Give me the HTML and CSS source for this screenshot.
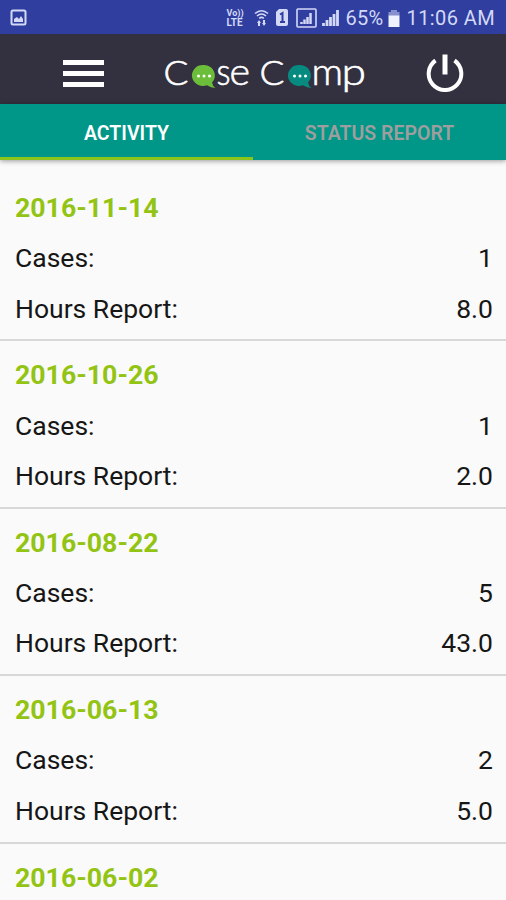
FILE: index.html
```html
<!DOCTYPE html>
<html lang="en">
<head>
  <meta charset="UTF-8" />
  <meta name="viewport" content="width=device-width, initial-scale=1.0" />
  <title>Case Camp</title>
  <link rel="stylesheet" href="styles.css">
</head>
<body>
  <div class="status-bar">
    <svg class="picture-icon" viewBox="0 0 18 18"><rect x="1.500" y="1.500" width="14" height="14" rx="1.500"/><path d="M4 13V10L7 8L9 10L11 7L13 10V13Z"/></svg>
    <div class="status-right">
      <div class="volte"><span>Vo))</span><span class="lte">LTE</span></div>
      <svg class="wifi-icon" width="15" height="18" viewBox="0 0 15 18"><path d="M1 4.500Q7.500 -1 14 4.500M3 7Q7.500 3 12 7M5.200 9.300Q7.500 7.500 9.800 9.300"/><path class="solid" d="M5 11L7 14H6V17H4V14H3ZM10 17L12 14H11V11H9V14H8Z"/></svg>
      <svg class="sim-icon" width="14" height="18" viewBox="0 0 14 18"><path d="M4 0H11Q13 0 13 2V15Q13 17 11 17H3Q1 17 1 15V3Z"/><path class="cut" d="M5 5.500L7.500 4V13M5 13H10"/></svg>
      <svg class="signal-boxed" width="22" height="21" viewBox="0 0 22 21"><rect x="1" y="1" width="19" height="18" rx="1"/><path class="bars" d="M5.500 14V16M8.500 11.500V16M11.500 9V16M14.500 5V16"/></svg>
      <svg class="signal" width="17" height="18" viewBox="0 0 17 18"><path d="M1.500 14V17M5 11V17M8.500 8V17M12 5V17M15.500 1V17"/></svg>
      <span class="percent">65%</span>
      <svg class="battery" width="12" height="17" viewBox="0 0 12 17"><path class="empty" d="M3 0H9V2H11.500V6H.5V2H3Z"/><path d="M.5 5.500H11.500V17H.5Z"/></svg>
      <span class="clock">11:06 AM</span>
    </div>
  </div>

  <header class="app-bar">
    <button class="menu-btn" aria-label="Menu"><span></span><span></span><span></span></button>
    <svg class="logo" width="204" height="50" viewBox="0 0 204 50">
      <text class="cap" x="0.500" y="41" textLength="25" lengthAdjust="spacingAndGlyphs">C</text>
      <g class="bubble-green" transform="translate(0 9)">
        <path d="M41 12a11 10.500 0 1 0 3 20.200q4 2.500 8.500 2.800q-3 -2 -3.500 -5.500A11 10.500 0 0 0 41 12Z"/>
        <circle cx="35.500" cy="23" r="1.500"/><circle cx="41" cy="23" r="1.500"/><circle cx="46.500" cy="23" r="1.500"/>
      </g>
      <text class="low" x="53.500" y="41" textLength="14" lengthAdjust="spacingAndGlyphs">s</text>
      <text class="low" x="66.500" y="41" textLength="20.500" lengthAdjust="spacingAndGlyphs">e</text>
      <text class="cap" x="96.500" y="41" textLength="25" lengthAdjust="spacingAndGlyphs">C</text>
      <g class="bubble-teal" transform="translate(0 9)">
        <path d="M137 12a11 10.500 0 1 0 3 20.200q4 2.500 8.500 2.800q-3 -2 -3.500 -5.500A11 10.500 0 0 0 137 12Z"/>
        <circle cx="131.500" cy="23" r="1.500"/><circle cx="137" cy="23" r="1.500"/><circle cx="142.500" cy="23" r="1.500"/>
      </g>
      <text class="low" x="148.500" y="41" textLength="31.500" lengthAdjust="spacingAndGlyphs">m</text>
      <text class="low" x="178.500" y="41" textLength="24.500" lengthAdjust="spacingAndGlyphs">p</text>
    </svg>
    <button class="power-btn" aria-label="Log out">
      <svg width="38" height="40" viewBox="0 0 38 40"><path d="M9.500 8.500A16.300 16.300 0 1 0 28.500 8.500"/><path class="stem" d="M19 2.500V22.500"/></svg>
    </button>
  </header>

  <nav class="tabs">
    <a class="tab active">ACTIVITY</a>
    <a class="tab">STATUS REPORT</a>
  </nav>

  <main class="activity-list">
    <section class="entry">
      <h2>2016-11-14</h2>
      <div class="row"><span>Cases:</span><span>1</span></div>
      <div class="row"><span>Hours Report:</span><span>8.0</span></div>
    </section>
    <section class="entry">
      <h2>2016-10-26</h2>
      <div class="row"><span>Cases:</span><span>1</span></div>
      <div class="row"><span>Hours Report:</span><span>2.0</span></div>
    </section>
    <section class="entry">
      <h2>2016-08-22</h2>
      <div class="row"><span>Cases:</span><span>5</span></div>
      <div class="row"><span>Hours Report:</span><span>43.0</span></div>
    </section>
    <section class="entry">
      <h2>2016-06-13</h2>
      <div class="row"><span>Cases:</span><span>2</span></div>
      <div class="row"><span>Hours Report:</span><span>5.0</span></div>
    </section>
    <section class="entry last">
      <h2>2016-06-02</h2>
    </section>
  </main>
</body>
</html>
```

FILE: styles.css
```css
* { box-sizing: border-box; }
body {
  margin: 0;
  height: 900px;
  overflow: hidden;
  font-family: Roboto, sans-serif;
  background: #fafafa;
  color: #161616;
  display: flex;
  flex-direction: column;
}
button {
  background: none;
  border: none;
  padding: 0;
}

.status-bar {
  flex: none;
  height: 34px;
  padding: 2px 11px 0 10px;
  background: #303f9f;
  color: #d3d9f7;
  display: flex;
  align-items: center;
  justify-content: space-between;
}
.picture-icon {
  width: 18px;
  height: 18px;
  stroke: #d3d9f7;
  stroke-width: 2;
  fill: none;
}
.picture-icon path {
  fill: #d3d9f7;
  stroke: none;
}
.status-right {
  display: flex;
  align-items: center;
  white-space: nowrap;
}
.status-right svg {
  flex: none;
  stroke: #d3d9f7;
  fill: none;
}
.volte {
  width: 19px;
  margin-right: 8px;
  font-size: 9px;
  font-weight: 700;
  line-height: 10px;
  display: flex;
  flex-direction: column;
}
.volte .lte { font-size: 10px; }
.wifi-icon {
  margin-right: 6px;
  stroke-width: 1.6;
}
.status-right .solid {
  fill: #d3d9f7;
  stroke: none;
}
.status-right .sim-icon {
  margin-right: 7px;
  fill: #d3d9f7;
  stroke: none;
}
.sim-icon .cut {
  fill: none;
  stroke: #303f9f;
  stroke-width: 2;
}
.signal-boxed {
  margin-right: 4px;
  stroke-width: 1.6;
}
.signal-boxed .bars { stroke-width: 2.5; }
.signal {
  margin-right: 7px;
  stroke-width: 2.8;
}
.percent {
  width: 40px;
  margin-right: 2px;
  font-size: 20px;
  letter-spacing: 0.3px;
}
.status-right .battery {
  margin-right: 7px;
  fill: #eef1ff;
  stroke: none;
}
.battery .empty { fill: #8590cc; }
.clock {
  font-size: 20px;
  letter-spacing: 0.4px;
}

.app-bar {
  flex: none;
  height: 70px;
  padding: 0 42px 0 63px;
  background: #33313f;
  display: flex;
  align-items: center;
  justify-content: space-between;
}
.menu-btn {
  width: 41px;
  display: flex;
  flex-direction: column;
  gap: 6px;
  padding-top: 8px;
}
.menu-btn span {
  width: 41px;
  height: 5px;
  background: #fff;
}
.logo { overflow: visible; }
.logo text {
  font-family: Lato, sans-serif;
  font-weight: 300;
  fill: #fff;
  stroke: #fff;
  stroke-width: 0.6;
}
.logo .cap { font-size: 34px; }
.logo .low { font-size: 37px; }
.logo circle { fill: #fff; }
.bubble-green path { fill: #6cbe3a; }
.bubble-teal path { fill: #078b80; }
.power-btn {
  display: flex;
  padding-top: 6px;
}
.power-btn svg {
  fill: none;
  stroke: #fff;
  stroke-width: 4;
}
.power-btn .stem { stroke-width: 5; }

.tabs {
  flex: none;
  height: 56px;
  background: #009688;
  box-shadow: 0 1px 5px rgba(0, 0, 0, 0.4);
  display: flex;
}
.tab {
  flex: 1;
  border-bottom: 3px solid transparent;
  padding-top: 5px;
  display: flex;
  align-items: center;
  justify-content: center;
  font-size: 19.5px;
  font-weight: 600;
  color: #9e9e9e;
}
.tab.active {
  color: #fff;
  border-color: #8bc51b;
}

.activity-list {
  flex: 1;
  min-height: 0;
  overflow: hidden;
  padding-top: 14px;
}
.entry {
  height: 167.4px;
  padding: 9px 13px 0 15px;
  border-bottom: 2px solid #d8d8d8;
  font-size: 26.5px;
  line-height: 50.25px;
}
.entry.last {
  height: auto;
  padding-bottom: 0;
  border-bottom: none;
}
.entry h2 {
  margin: 0;
  font-size: 26.7px;
  font-weight: 700;
  color: #93c413;
}
.row {
  display: flex;
  justify-content: space-between;
}
```
